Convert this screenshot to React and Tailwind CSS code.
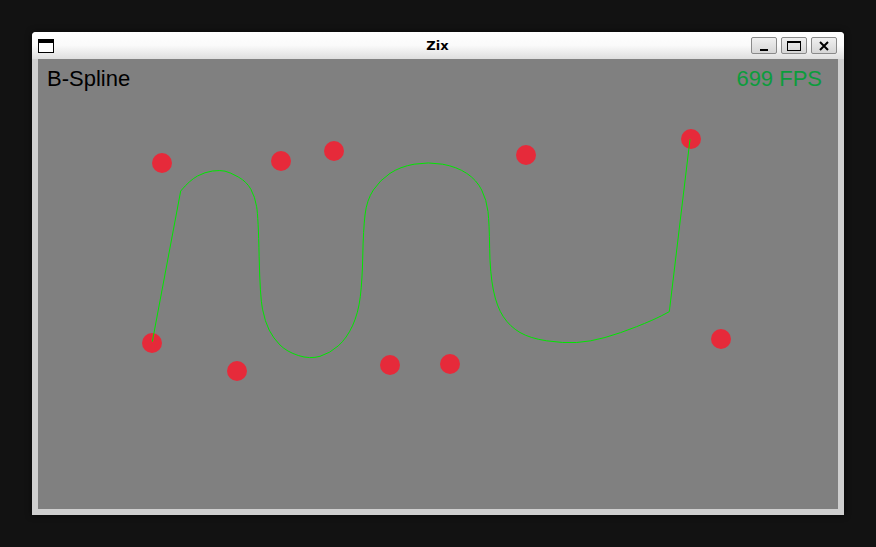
const dots = [
  [162, 163], [281, 161], [334, 151], [526, 155], [691, 139],
  [152, 343], [237, 371], [390, 365], [450, 364], [721, 339],
];

// curve sampled from the screenshot, page coordinates
const curve = [
  [152.3, 341.7], [180.7, 191], [190, 180], [205, 172], [220, 170], [230, 172.3],
  [246.7, 181.7], [255, 196.7], [258.3, 216.7], [260, 296.7], [265, 321.7],
  [273.3, 338.3], [286.7, 351.7], [310, 359.3], [330, 353.3], [346.7, 338.3],
  [358.3, 313.3], [362.3, 280], [363.3, 230], [366.7, 200], [380, 180],
  [400, 166.7], [428.3, 161.7], [456.7, 166.7], [476.7, 180], [486.7, 200],
  [489.3, 223.3], [490, 273.3], [496.7, 306.7], [510, 326.7], [530, 338.3],
  [563.3, 343.3], [590, 341.7], [620, 333.3], [653.3, 320], [669.3, 311.7],
  [690, 139.3],
];

const OX = 38;
const OY = 59;

// straight first and last leg, rounded in between
function smoothPath(points) {
  const p = points.map(([x, y]) => [x - OX, y - OY]);
  let d = `M${p[0][0]},${p[0][1]} L${p[1][0]},${p[1][1]}`;
  for (let i = 2; i < p.length - 2; i++) {
    const mx = (p[i][0] + p[i + 1][0]) / 2;
    const my = (p[i][1] + p[i + 1][1]) / 2;
    d += ` Q${p[i][0]},${p[i][1]} ${mx},${my}`;
  }
  const a = p[p.length - 2];
  const b = p[p.length - 1];
  d += ` L${a[0]},${a[1]} L${b[0]},${b[1]}`;
  return d;
}

function TitleButton({ children }) {
  return (
    <div className="flex h-[17px] w-[26px] items-center justify-center rounded-[2px] border border-[#8a8a8a] bg-gradient-to-b from-[#f0f0f0] to-[#d6d6d6]">
      {children}
    </div>
  );
}

export default function App() {
  return (
    <div className="h-[547px] w-[876px] bg-[#121212] pl-[32px] pt-[32px]">
      <div className="flex w-[812px] flex-col rounded-t-[4px] bg-[#cfcfcf] shadow-[0_0_6px_rgba(0,0,0,0.6)]">
        <div className="grid h-[27px] grid-cols-[1fr_auto_1fr] items-center rounded-t-[4px] bg-gradient-to-b from-[#ffffff] via-[#fafafa] to-[#dedede] pl-[6px] pr-[7px]">
          <div className="flex">
            <div className="mt-[1px] h-[14px] w-[16px] border border-t-[4px] border-black bg-white" />
          </div>
          <div
            className="text-center text-[13px] font-bold text-black"
            style={{ fontFamily: '"DejaVu Sans", sans-serif' }}
          >
            Zix
          </div>
          <div className="flex justify-end gap-[4px]">
            <TitleButton>
              <div className="mt-[8px] h-[2px] w-[8px] bg-black" />
            </TitleButton>
            <TitleButton>
              <div className="h-[10px] w-[14px] border border-t-[2px] border-black" />
            </TitleButton>
            <TitleButton>
              <svg width="10" height="10" viewBox="0 0 10 10">
                <path d="M1 1 L9 9 M9 1 L1 9" stroke="#000" strokeWidth="2" />
              </svg>
            </TitleButton>
          </div>
        </div>
        <div className="px-[6px] pb-[6px]">
          <div className="relative h-[450px] w-[800px] bg-[#808080]">
            <svg width="800" height="450" className="block">
              {dots.map(([x, y], i) => (
                <circle key={i} cx={x - OX} cy={y - OY} r="10" fill="#e62a3a" />
              ))}
              <path d={smoothPath(curve)} fill="none" stroke="#00e600" strokeWidth="1" />
            </svg>
            <div
              className="absolute left-[9px] top-[9px] text-[22px] leading-none text-black"
              style={{ fontFamily: '"Liberation Sans", sans-serif' }}
            >
              B-Spline
            </div>
            <div
              className="absolute right-[16px] top-[9px] text-[22px] leading-none text-[#0c9c3c]"
              style={{ fontFamily: '"Liberation Sans", sans-serif' }}
            >
              699 FPS
            </div>
          </div>
        </div>
      </div>
    </div>
  );
}
